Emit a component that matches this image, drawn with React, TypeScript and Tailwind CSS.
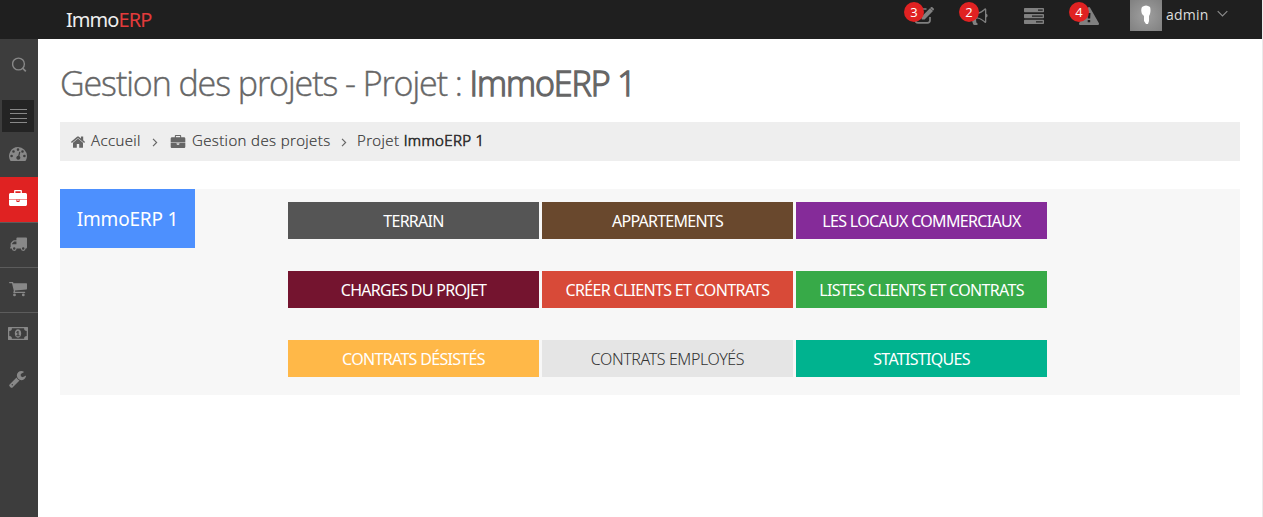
import type { ReactNode } from "react";

type IconProps = { className?: string };

const Gauge = ({ className }: IconProps) => (
  <svg className={className} viewBox="0 0 18 15" fill="currentColor">
    <path
      fillRule="evenodd"
      d="M9 0a9 9 0 0 1 9 9c0 1.8-.5 3.3-1.4 4.700-.2.3-.5.4-.8.4H2.200c-.3 0-.6-.1-.8-.4A9 9 0 0 1 9 0ZM2.600 7.700a1.300 1.300 0 1 0 0 2.600 1.300 1.300 0 0 0 0-2.600Zm1.900-4.500a1.300 1.300 0 1 0 0 2.600 1.300 1.300 0 0 0 0-2.600ZM9 1.300a1.300 1.300 0 1 0 0 2.600 1.300 1.300 0 0 0 0-2.600Zm4.500 1.900a1.300 1.300 0 1 0 0 2.600 1.300 1.300 0 0 0 0-2.600Zm1.900 4.500a1.300 1.300 0 1 0 0 2.600 1.300 1.300 0 0 0 0-2.600Zm-5.200-2.900-1 3.900a2 2 0 1 0 1.200.3l1-3.900Z"
    />
  </svg>
);

const Briefcase = ({ className }: IconProps) => (
  <svg className={className} viewBox="0 0 18 16" fill="currentColor">
    <path
      fillRule="evenodd"
      d="M6.400 1.300v1.600h5.200V1.300Zm4.200 8.400v1.600c0 .4-.2.600-.6.600H8c-.4 0-.6-.2-.6-.6V9.700H0v4.800c0 .9.700 1.500 1.600 1.500h14.800c.9 0 1.600-.6 1.600-1.500V9.700ZM8.400 9.700v1.200h1.200V9.700ZM18 4.500v4.700H0V4.500c0-.9.700-1.600 1.600-1.600h3.500V1c0-.6.400-1 1-1h5.800c.6 0 1 .4 1 1v1.900h3.500c.9 0 1.600.7 1.600 1.600Z"
    />
  </svg>
);

const Truck = ({ className }: IconProps) => (
  <svg className={className} viewBox="0 0 18 15" fill="currentColor">
    <path
      fillRule="evenodd"
      d="M7.700 0h9.400c.5 0 .9.400.9.900v9.600c0 1-.6 1.300-1.500 1.300a2.500 2.500 0 0 1-5 0H7a2.500 2.500 0 0 1-5 0H.7c-.4 0-.7-.2-.7-.7s.3-.6.7-.6V6.700c0-.4.100-.8.400-1.100l2-2c.3-.3.700-.500 1.200-.500h2.500V.9c0-.5.400-.9.900-.9ZM2 7.300h4.800V4.400H4.500c-.2 0-.3.100-.4.200L2.100 6.600Zm2.500 3.200a1.300 1.300 0 1 0 0 2.600 1.300 1.300 0 0 0 0-2.600Zm9.500 0a1.300 1.300 0 1 0 0 2.600 1.300 1.300 0 0 0 0-2.600Z"
    />
  </svg>
);

const Cart = ({ className }: IconProps) => (
  <svg className={className} viewBox="0 0 18 15" fill="currentColor">
    <path d="M0 .6C0 .2.300 0 .6 0h2.900c.7 0 .8.600.9 1.200h13c.4 0 .6.300.6.600v5c0 .3-.2.600-.5.600L6 8.600c.100.400.200.800 0 1.200h9.700c.8 0 .8 1.200 0 1.200H4.900c-.5 0-.8-.5-.5-1l.4-1.200L3 1.200H.6C.3 1.200 0 1 0 .6Z" />
    <circle cx="5.500" cy="12.900" r="1.400" />
    <circle cx="14.300" cy="12.900" r="1.400" />
  </svg>
);

const Money = ({ className }: IconProps) => (
  <svg className={className} viewBox="0 0 20 13" fill="currentColor">
    <path
      fillRule="evenodd"
      d="M0 .6C0 .2.300 0 .6 0h18.800c.4 0 .6.200.6.600v11.800c0 .4-.2.600-.6.600H.6c-.3 0-.6-.2-.6-.6ZM1.300 4v5a2.600 2.600 0 0 1 2.600 2.700h12.200A2.600 2.600 0 0 1 18.700 9V4a2.600 2.600 0 0 1-2.600-2.700H3.900A2.600 2.600 0 0 1 1.300 4ZM10 2.300c2 0 3.200 2 3.200 4.200S12 10.700 10 10.700s-3.200-2-3.200-4.200S8 2.300 10 2.300Zm-.4 1.600L8.100 5.200l.7.800.6-.5v2.700H8.300v1h3.400v-1h-1.100V3.900Z"
    />
  </svg>
);

const Wrench = ({ className }: IconProps) => (
  <svg className={className} viewBox="0 0 1664 1664" fill="currentColor">
    <path
      fillRule="evenodd"
      d="M384 1344a64 64 0 1 0-128 0 64 64 0 0 0 128 0Zm644-420-682 682q-37 37-90 37-52 0-91-37L59 1498q-38-36-38-90 0-53 38-91l681-681q39 98 114.500 173.500T1028 924Zm634-435q0 39-23 106-47 134-164.500 217.500T1216 896q-185 0-316.500-131.500T768 448t131.500-316.500T1216 0q58 0 121.500 16.500T1445 63q16 11 16 28t-16 28l-293 169v224l193 107q5-3 79-48.500t135.500-81T1630 454q15 0 23.500 10t8.500 25Z"
    />
  </svg>
);

const House = ({ className }: IconProps) => (
  <svg className={className} viewBox="0 0 14 12" fill="currentColor">
    <path d="M12 6.800v4.400c0 .3-.2.600-.6.600H8.200V8H5.800v3.800H2.600c-.4 0-.6-.3-.6-.6V6.800l5-4.200ZM13.900 6.200l-.6.600c-.1.100-.3.100-.4 0L7 1.900 1.100 6.800c-.1.100-.3.100-.4 0l-.6-.6c-.1-.1-.1-.3 0-.4L6.300.600c.4-.3 1-.3 1.400 0L9.900 2.400V.7c0-.2.100-.3.300-.3h1.700c.2 0 .3.100.3.300v3.600l1.700 1.500c.1.100.1.300 0 .4Z" />
  </svg>
);

const Edit = ({ className }: IconProps) => (
  <svg className={className} viewBox="0 0 20 17" fill="none">
    <path
      d="M16 10v3.200a2.600 2.600 0 0 1-2.600 2.600H4a2.600 2.600 0 0 1-2.600-2.600V4.600A2.600 2.600 0 0 1 4 2h8.500"
      stroke="currentColor"
      strokeWidth="1.700"
    />
    <path d="M16 1.200 19 4l-8.400 8.400H7.700V9.500ZM17 .3c.4-.4 1-.4 1.400 0l1.300 1.300c.4.400.4 1 0 1.400l-.6.600-2.900-2.700Z" fill="currentColor" />
  </svg>
);

const Bullhorn = ({ className }: IconProps) => (
  <svg className={className} viewBox="0 0 19 18" fill="currentColor">
    <path
      fillRule="evenodd"
      d="M17.300 6.800a1.900 1.900 0 0 1 0 3.600v4.300c0 .7-.6 1.300-1.300 1.300-2-1.800-4.600-4.100-7.900-4.400-1.200.4-1.500 1.700-.7 2.500-.7 1.100.2 1.900 1.500 2.800-.7 1.500-3.400 1.600-4.600.5C3.700 15.500 2.700 13.800 3.300 11.500H2a2 2 0 0 1-2-1.900V7.600c0-1.100.9-2 2-2h5.200c3.500 0 6.500-2.400 8.800-4.400.7 0 1.300.6 1.300 1.300ZM16 2.900C13.500 5 11 6.500 8.500 6.800v3.600c2.500.300 5 1.800 7.500 3.900Z"
    />
  </svg>
);

const Tasks = ({ className }: IconProps) => (
  <svg className={className} viewBox="0 0 20 16" fill="currentColor">
    <path
      fillRule="evenodd"
      d="M1 0h18c.6 0 1 .4 1 1v2.300c0 .6-.4 1-1 1H1c-.6 0-1-.4-1-1V1c0-.6.400-1 1-1Zm13 1.500v1.300h4.700V1.500ZM1 5.900h18c.6 0 1 .4 1 1v2.300c0 .6-.4 1-1 1H1c-.6 0-1-.4-1-1V6.900c0-.6.400-1 1-1Zm7 1.500v1.300h10.700V7.400ZM1 11.700h18c.6 0 1 .4 1 1V15c0 .6-.4 1-1 1H1c-.6 0-1-.4-1-1v-2.300c0-.6.400-1 1-1Zm11 1.500v1.300h6.700v-1.300Z"
    />
  </svg>
);

const Warning = ({ className }: IconProps) => (
  <svg className={className} viewBox="0 0 20 18" fill="currentColor">
    <path
      fillRule="evenodd"
      d="M11.100.700l8.700 15.400c.5.800-.1 1.900-1.100 1.900H1.300c-1 0-1.600-1.100-1.100-1.900L8.900.700c.5-.9 1.700-.9 2.200 0ZM8.500 6l.3 5.600h2.400l.3-5.600Zm.2 7v2.300h2.500V13Z"
    />
  </svg>
);

const Chevron = ({ className }: IconProps) => (
  <svg className={className} viewBox="0 0 6 10" fill="none" stroke="currentColor" strokeWidth="1.300">
    <path d="m.8 1 4 4-4 4" />
  </svg>
);

function Notice({ count, children }: { count?: number; children: ReactNode }) {
  return (
    <li className="relative flex h-[39px] w-[55px] justify-center text-[#808080]">
      {children}
      {count !== undefined && (
        <span className="absolute left-[8px] top-[2px] flex size-5 items-center justify-center rounded-full bg-[#e02222] text-[13px] leading-none text-white">
          {count}
        </span>
      )}
    </li>
  );
}

const actions = [
  { label: "TERRAIN", box: "bg-[#555555] text-white tracking-[-0.75px]" },
  { label: "APPARTEMENTS", box: "bg-[#69482d] text-white tracking-[-0.75px]" },
  { label: "LES LOCAUX COMMERCIAUX", box: "bg-[#852b99] text-white tracking-[-0.68px]" },
  { label: "CHARGES DU PROJET", box: "bg-[#74142f] text-white tracking-[-0.7px]" },
  { label: "CRÉER CLIENTS ET CONTRATS", box: "bg-[#d84a38] text-white tracking-[-0.68px]" },
  { label: "LISTES CLIENTS ET CONTRATS", box: "bg-[#37aa48] text-white tracking-[-0.68px]" },
  { label: "CONTRATS DÉSISTÉS", box: "bg-[#ffb848] text-white tracking-[-0.68px]" },
  { label: "CONTRATS EMPLOYÉS", box: "bg-[#e5e5e5] text-[#333] font-light tracking-[-0.4px]" },
  { label: "STATISTIQUES", box: "bg-[#00b38f] text-white tracking-[-0.7px]" },
];

export default function App() {
  return (
    <div className="flex h-[517px] flex-col overflow-hidden border-r border-[#ebebeb] bg-white font-['Open_Sans','Noto_Sans',sans-serif]">
      <header className="flex h-[39px] w-full shrink-0 items-start justify-between bg-[#1f1f1f]">
        <a className="ml-[66px] mt-[7px] whitespace-nowrap font-['Noto_Sans'] text-[20px] leading-[26px] tracking-[-0.95px] text-[#eee]">
          Immo<span className="text-[#e23b3b]">ERP</span>
        </a>
        <div className="flex">
          <ul className="flex">
            <Notice count={3}><Edit className="mt-[7px] h-[17px] w-5" /></Notice>
            <Notice count={2}><Bullhorn className="mt-[7px] h-[18px] w-[19px]" /></Notice>
            <Notice><Tasks className="mt-[8px] h-4 w-5" /></Notice>
            <Notice count={4}><Warning className="mt-[7px] h-[18px] w-5" /></Notice>
          </ul>
          <div className="ml-[14px] mr-[34px] flex">
            <span className="flex h-[31px] w-8 justify-center bg-[radial-gradient(#a0a0a0,#808080)]">
              <svg className="mt-[5px] h-5 w-[10px]" viewBox="0 0 10 20" fill="white">
                <path d="M1 2Q5-1 9 2q1 3 0 7L8 11v5l-1 3H5l-2-3v-5L1 9Q-.5 5 1 2Z" />
              </svg>
            </span>
            <span className="ml-[3px] mt-[4px] w-[43px] pl-px text-[14px] leading-[21px] tracking-[0.2px] text-[#ddd]">admin</span>
            <svg className="ml-[9px] mt-[10px] h-2 w-[11px] text-[#8a8a8a]" viewBox="0 0 11 8" fill="none" stroke="currentColor" strokeWidth="1.200">
              <path d="m.7 1.200 4.800 4.800 4.800-4.800" />
            </svg>
          </div>
        </div>
      </header>
      <div className="flex min-h-0 flex-1">
        <nav className="flex w-[38px] shrink-0 flex-col bg-[#3d3d3d] text-[#888]">
          <div className="flex h-[61px] items-start pl-[12px] pt-[18px]">
            <svg className="size-[15px]" viewBox="0 0 15 15" fill="none" stroke="currentColor" strokeWidth="1.400">
              <circle cx="6.500" cy="7" r="5.900" />
              <path d="m10.500 11 3.300 3.300" strokeWidth="1.700" />
            </svg>
          </div>
          <div className="ml-[2px] flex h-8 w-8 flex-col items-center bg-[#242424] pt-[9px]">
            <i className="mb-[3px] h-px w-[17px] bg-[#888]" />
            <i className="mb-[4px] h-px w-[17px] bg-[#888]" />
            <i className="mb-[3px] h-px w-[17px] bg-[#888]" />
            <i className="h-px w-[17px] bg-[#888]" />
          </div>
          <a className="flex h-[45px] justify-center pr-[2px] pt-[15px]"><Gauge className="h-[15px] w-[18px]" /></a>
          <a className="flex h-[45px] justify-center bg-[#e02222] pr-[2px] pt-[13px] text-white"><Briefcase className="h-4 w-[18px]" /></a>
          <a className="flex h-[45px] justify-center border-t border-[#5c5c5c] pr-[1px] pt-[14px]"><Truck className="h-[15px] w-[17px]" /></a>
          <a className="flex h-[45px] justify-center border-t border-[#5c5c5c] pr-[2px] pt-[14px]"><Cart className="h-[15px] w-[18px]" /></a>
          <a className="flex h-[45px] justify-center border-t border-[#5c5c5c] pr-[2px] pt-[14px]"><Money className="h-[13px] w-5" /></a>
          <a className="flex h-[45px] justify-center pr-[3px] pt-[14px]"><Wrench className="h-[17px] w-[17px]" /></a>
        </nav>
        <main className="flex-1 pl-[22px] pr-[22px]">
          <h1 className="mt-[20px] h-[48px] whitespace-nowrap text-[34px] font-light leading-[48px] tracking-[-1.07px] text-[#666] [-webkit-text-stroke:0.4px_#666]">
            Gestion des projets - Projet :{" "}
            <span className="[-webkit-text-stroke:1.3px_#666]">ImmoERP 1</span>
          </h1>
          <div className="mt-[15px] flex h-[39px] w-[1180px] items-center whitespace-nowrap bg-[#eeeeee] pl-[11px] text-[15px] font-light tracking-[0.38px] text-[#333] [-webkit-text-stroke:0.2px_#333]">
            <House className="h-3 w-[14px] text-[#666]" />
            <span className="-mt-[3px] ml-[6px] w-[51px]">Accueil</span>
            <Chevron className="ml-[10px] mt-[2px] h-[9px] w-[6px] text-[#666]" />
            <Briefcase className="ml-[12px] h-[13px] w-4 text-[#666]" />
            <span className="-mt-[3px] ml-[6px] w-[139px]">Gestion des projets</span>
            <Chevron className="ml-[10px] mt-[2px] h-[9px] w-[6px] text-[#666]" />
            <span className="-mt-[3px] ml-[10px]">
              Projet <span className="[-webkit-text-stroke:0.7px_#333]">ImmoERP 1</span>
            </span>
          </div>
          <section className="mt-[28px] flex h-[206px] w-[1180px] items-start bg-[#f7f7f7]">
            <div className="flex h-[59px] w-[135px] items-center justify-center whitespace-nowrap bg-[#4d90fe] pt-[2px] font-['Noto_Sans'] text-[19px] tracking-[-0.2px] text-white">
              ImmoERP 1
            </div>
            <div className="ml-[93px] mt-[13px] grid grid-cols-[251px_251px_251px] gap-x-[3px] gap-y-8">
              {actions.map((a) => (
                <button key={a.label} className={`flex h-[37px] items-center justify-center whitespace-nowrap font-['Noto_Sans'] text-[16px] ${a.box}`}>
                  {a.label}
                </button>
              ))}
            </div>
          </section>
        </main>
      </div>
    </div>
  );
}
